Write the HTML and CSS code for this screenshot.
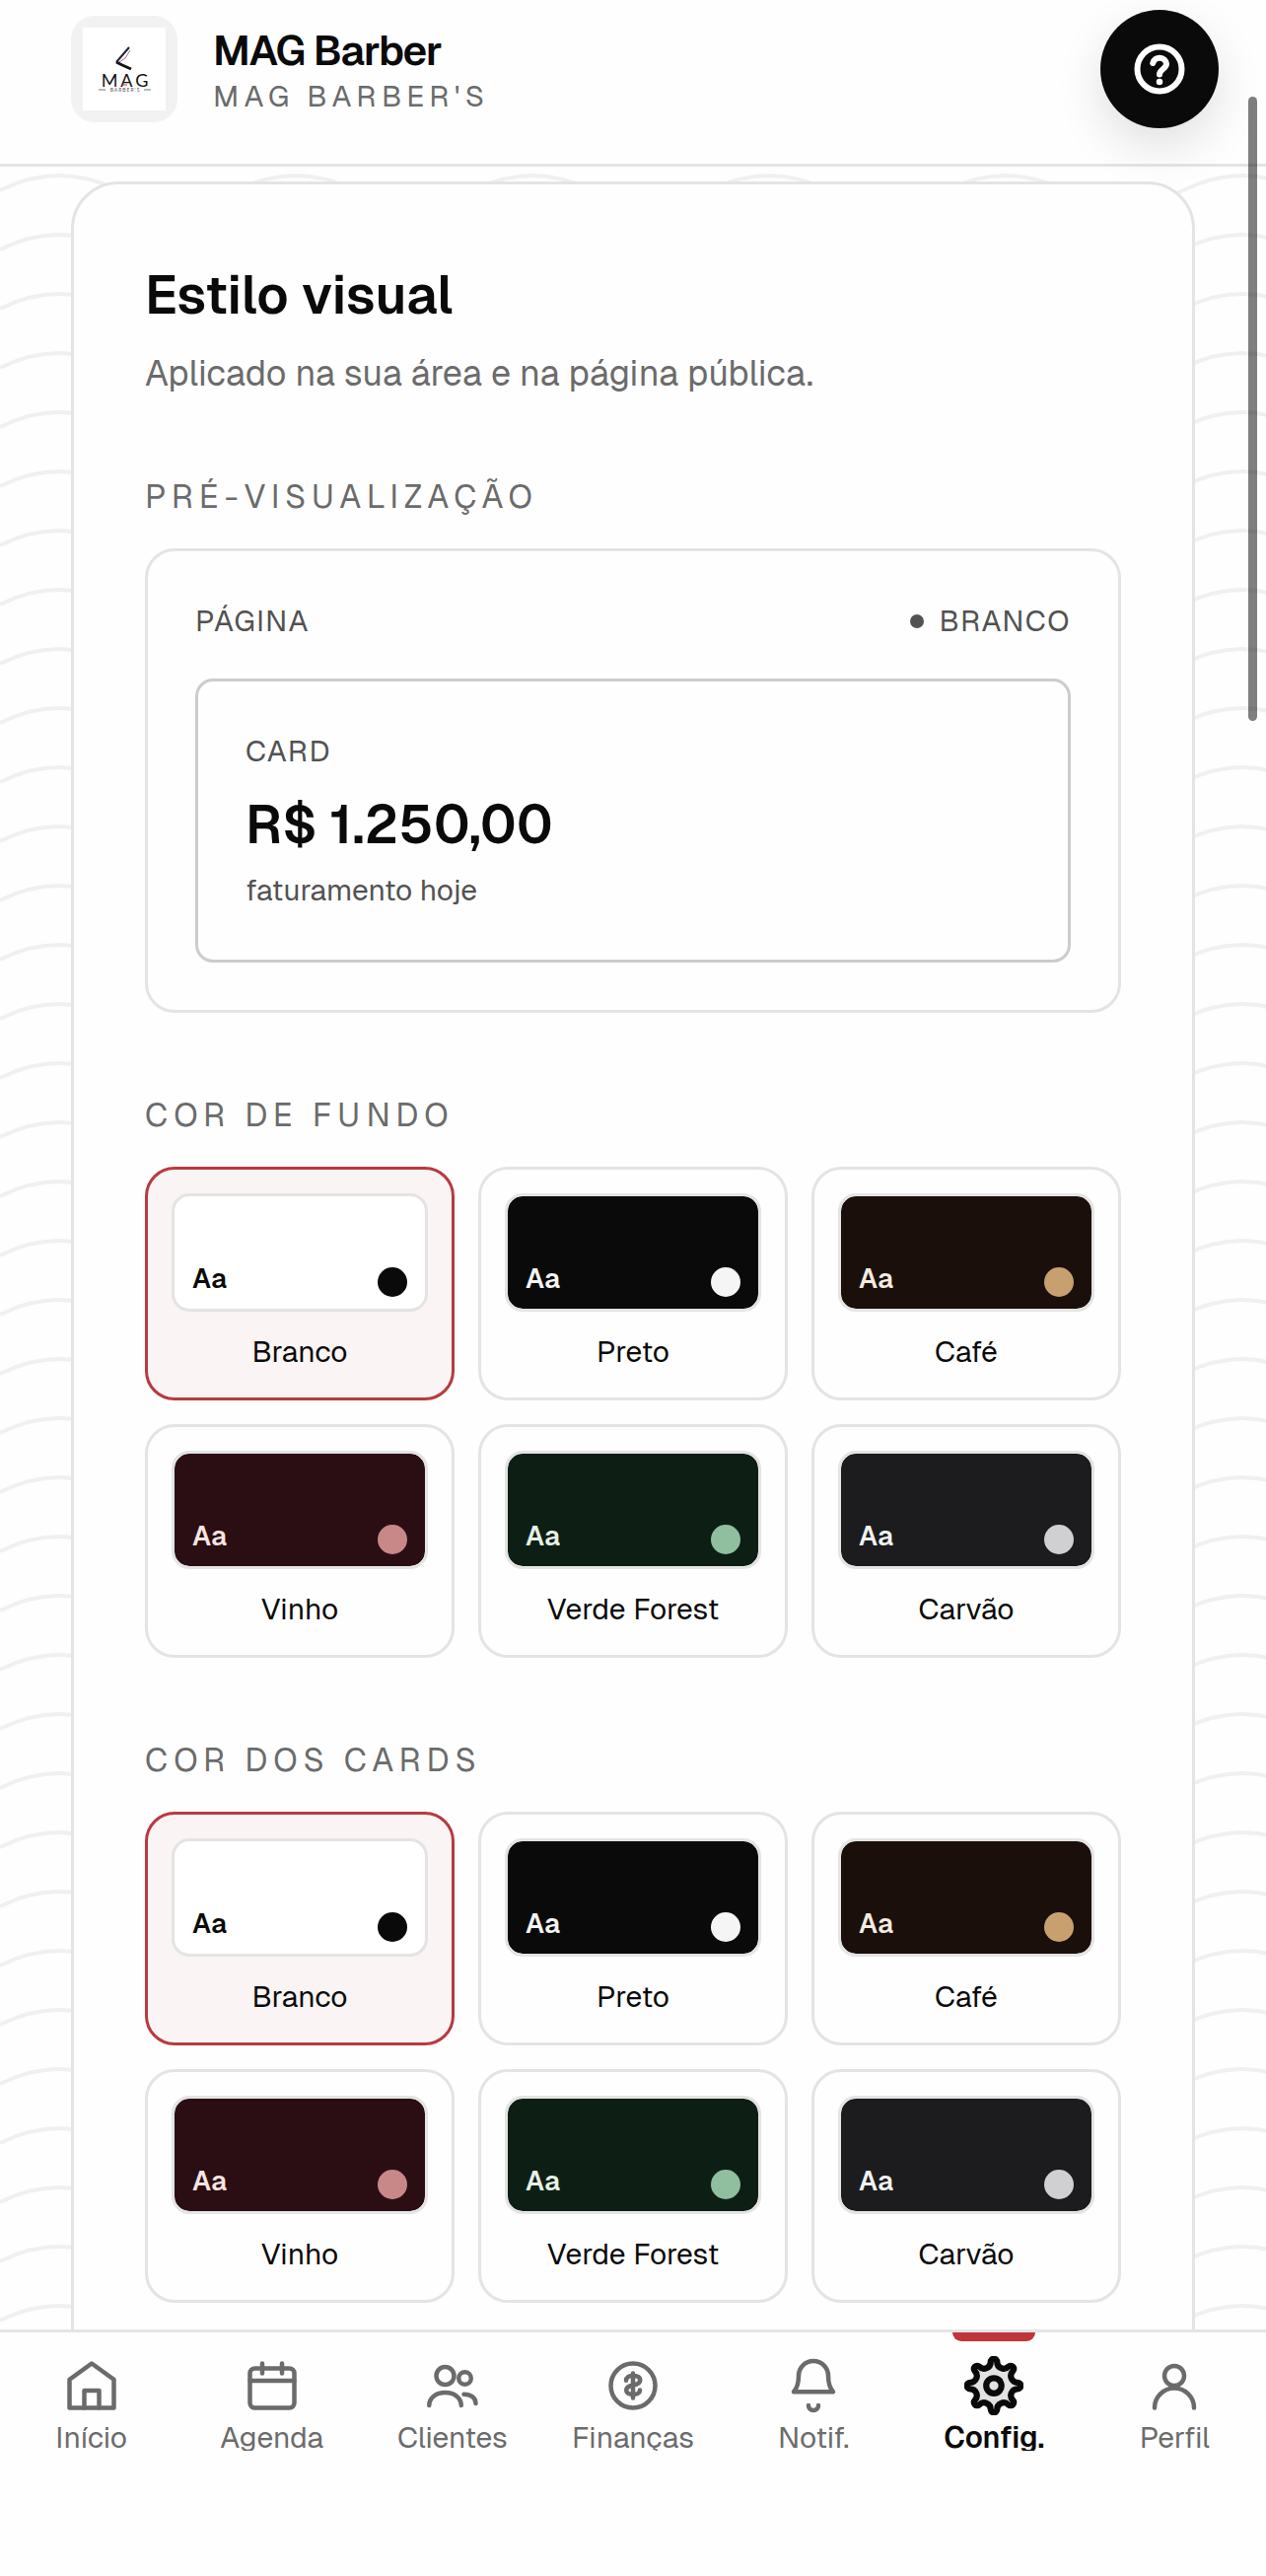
FILE: index.html
```html
<!DOCTYPE html>
<html lang="pt-BR">
<head>
    <meta charset="UTF-8">
    <meta name="viewport" content="width=device-width, initial-scale=1.0">
    <title>MAG Barber - Config.</title>
    <link rel="stylesheet" href="styles.css">
</head>
<body>
    <header class="topbar">
        <div class="logo">
            <svg viewBox="0 0 84 84" aria-hidden="true">
                <rect width="84" height="84" fill="#fff"/>
                <path d="M47 20L34 35" stroke="#1f2340" stroke-width="2" fill="none"/>
                <path d="M48 23L43 31l-6 4" stroke="#a8707c" stroke-width="1" fill="none"/>
                <path d="M34 35l6 3 9 4" stroke="#111" stroke-width="3" fill="none"/>
                <text class="logo-name" x="44" y="60">MAG</text>
                <path d="M39 58h6" stroke="#c0393f" stroke-width="1"/>
                <path d="M16 63h7M62 63h7" stroke="#777" stroke-width="1"/>
                <text class="logo-sub" x="43" y="65">BARBER'S</text>
            </svg>
        </div>
        <div class="brand">
            <h1>MAG Barber</h1>
            <p>MAG BARBER'S</p>
        </div>
        <button class="help" type="button" aria-label="Ajuda">
            <svg viewBox="0 0 24 24" aria-hidden="true">
                <circle cx="12" cy="12" r="9"/>
                <path d="M9.3 9.6a2.8 2.8 0 0 1 5.5.3c0 2-2.8 2.2-2.8 4.3"/>
                <circle class="dot" cx="12" cy="17.2" r="1.3"/>
            </svg>
        </button>
    </header>

    <main class="content">
        <section class="card">
            <h2>Estilo visual</h2>
            <p class="intro">Aplicado na sua área e na página pública.</p>

            <h3 class="label">PRÉ-VISUALIZAÇÃO</h3>
            <div class="preview">
                <div class="preview-head">
                    <span>PÁGINA</span>
                    <span class="current">BRANCO</span>
                </div>
                <div class="preview-card">
                    <p class="tag">CARD</p>
                    <p class="amount">R$ 1.250,00</p>
                    <p>faturamento hoje</p>
                </div>
            </div>

            <fieldset class="group">
                <legend class="label">COR DE FUNDO</legend>
                <div class="options">
                    <label class="option"><input type="radio" name="fundo" checked><span class="swatch branco">Aa</span>Branco</label>
                    <label class="option"><input type="radio" name="fundo"><span class="swatch preto">Aa</span>Preto</label>
                    <label class="option"><input type="radio" name="fundo"><span class="swatch cafe">Aa</span>Café</label>
                    <label class="option"><input type="radio" name="fundo"><span class="swatch vinho">Aa</span>Vinho</label>
                    <label class="option"><input type="radio" name="fundo"><span class="swatch verde">Aa</span>Verde Forest</label>
                    <label class="option"><input type="radio" name="fundo"><span class="swatch carvao">Aa</span>Carvão</label>
                </div>
            </fieldset>

            <fieldset class="group">
                <legend class="label">COR DOS CARDS</legend>
                <div class="options">
                    <label class="option"><input type="radio" name="cards" checked><span class="swatch branco">Aa</span>Branco</label>
                    <label class="option"><input type="radio" name="cards"><span class="swatch preto">Aa</span>Preto</label>
                    <label class="option"><input type="radio" name="cards"><span class="swatch cafe">Aa</span>Café</label>
                    <label class="option"><input type="radio" name="cards"><span class="swatch vinho">Aa</span>Vinho</label>
                    <label class="option"><input type="radio" name="cards"><span class="swatch verde">Aa</span>Verde Forest</label>
                    <label class="option"><input type="radio" name="cards"><span class="swatch carvao">Aa</span>Carvão</label>
                </div>
            </fieldset>
        </section>
    </main>

    <nav class="tabs">
        <a href="#inicio">
            <svg viewBox="0 0 24 24" aria-hidden="true"><path d="M3 9.5L12 3l9 6.5V21H3z"/><path d="M9 21v-7h6v7"/></svg>
            <span>Início</span>
        </a>
        <a href="#agenda">
            <svg viewBox="0 0 24 24" aria-hidden="true"><rect x="3" y="5" width="18" height="16" rx="2"/><path d="M3 10h18M8 3v4M16 3v4"/></svg>
            <span>Agenda</span>
        </a>
        <a href="#clientes">
            <svg viewBox="0 0 24 24" aria-hidden="true"><circle cx="9" cy="8" r="3.6"/><path d="M2.5 20c0-3 2.7-5.2 6.5-5.2s6.5 2.2 6.5 5.2"/><circle cx="17" cy="9" r="2.5"/><path d="M16.6 15.5c2.9 0 4.8 1.5 4.8 3.7"/></svg>
            <span>Clientes</span>
        </a>
        <a href="#financas">
            <svg viewBox="0 0 24 24" aria-hidden="true"><circle cx="12" cy="12" r="9"/><path d="M12 7v10M9.2 9.9c0-1.2 1.2-2 2.8-2s2.9.7 2.9 1.9-1.2 1.7-2.9 2-2.7.8-2.7 2 1.2 1.8 2.7 1.8 2.8-.6 2.8-1.8"/></svg>
            <span>Finanças</span>
        </a>
        <a href="#notif">
            <svg viewBox="0 0 24 24" aria-hidden="true"><path d="M6 8a6 6 0 0 1 12 0c0 3.5.7 5 2 6.5H4C5.3 13 6 11.5 6 8z"/><path d="M10 20a2 2 0 0 0 4 0"/></svg>
            <span>Notif.</span>
        </a>
        <a href="#config" class="active" aria-current="page">
            <svg viewBox="0 0 24 24" aria-hidden="true"><g transform="translate(12 12)"><path d="M-1.3 -9.6A1.3 1.3 0 0 1 1.3 -9.6C1.3 -7.2 4.17 -6.01 5.87 -7.71A1.3 1.3 0 0 1 7.71 -5.87C6.01 -4.17 7.2 -1.3 9.6 -1.3A1.3 1.3 0 0 1 9.6 1.3C7.2 1.3 6.01 4.17 7.71 5.87A1.3 1.3 0 0 1 5.87 7.71C4.17 6.01 1.3 7.2 1.3 9.6A1.3 1.3 0 0 1 -1.3 9.6C-1.3 7.2 -4.17 6.01 -5.87 7.71A1.3 1.3 0 0 1 -7.71 5.87C-6.01 4.17 -7.2 1.3 -9.6 1.3A1.3 1.3 0 0 1 -9.6 -1.3C-7.2 -1.3 -6.01 -4.17 -7.71 -5.87A1.3 1.3 0 0 1 -5.87 -7.71C-4.17 -6.01 -1.3 -7.2 -1.3 -9.6z"/><circle r="3.1"/></g></svg>
            <span>Config.</span>
        </a>
        <a href="#perfil">
            <svg viewBox="0 0 24 24" aria-hidden="true"><circle cx="12" cy="8" r="4"/><path d="M4 21a8 8 0 0 1 16 0"/></svg>
            <span>Perfil</span>
        </a>
    </nav>

    <div class="scroll-thumb"></div>
</body>
</html>
```
FILE: styles.css
```css
* {
    box-sizing: border-box;
    margin: 0;
    padding: 0;
}
body {
    position: relative;
    display: flex;
    flex-direction: column;
    height: 100vh;
    overflow: hidden;
    background: #fefefe;
    color: #0a0a0a;
    font-family: "Geist", "Inter", sans-serif;
    font-size: 30px;
    line-height: 45px;
}

/* header */
.topbar {
    position: relative;
    z-index: 1;
    display: flex;
    align-items: center;
    gap: 36px;
    padding: 10px 48px 36px 72px;
    background: #fefefe;
    border-bottom: 3px solid #e4e4e4;
}
.logo {
    display: flex;
    padding: 12px;
    border-radius: 24px;
    background: #f2f2f2;
}
.logo svg {
    width: 84px;
    height: 84px;
}
.logo-name {
    font-family: "Lato", sans-serif;
    font-size: 18px;
    letter-spacing: 3px;
    text-anchor: middle;
    fill: #111;
}
.logo-sub {
    font-family: "Lato", sans-serif;
    font-size: 5px;
    letter-spacing: 1px;
    text-anchor: middle;
    fill: #555;
}
.brand {
    flex: 1;
    padding-top: 6px;
}
.brand h1 {
    font-size: 42px;
    font-weight: 600;
    line-height: 48px;
    letter-spacing: -0.025em;
}
.brand p {
    color: #6b6b6b;
    letter-spacing: 0.18em;
}
.help {
    display: flex;
    align-items: center;
    justify-content: center;
    width: 120px;
    height: 120px;
    border: none;
    border-radius: 50%;
    background: #0a0a0a;
    box-shadow: 0 18px 48px rgba(0, 0, 0, 0.12);
    cursor: pointer;
}
.help svg {
    width: 60px;
    height: 60px;
    fill: none;
    stroke: #fff;
    stroke-width: 2.4;
    stroke-linecap: round;
}
.help .dot {
    fill: #fff;
    stroke: none;
}

/* page */
.content {
    flex: 1;
    min-height: 0;
    overflow: hidden;
    padding: 15px 72px;
    background: url("data:image/svg+xml,%3Csvg xmlns='http://www.w3.org/2000/svg' width='240' height='60'%3E%3Cpath d='M0 30Q60 0 120 30T240 30' fill='none' stroke='%23f0f0f0' stroke-width='4'/%3E%3C/svg%3E") 0 -6px;
}
.card {
    padding: 72px;
    border: 3px solid #e4e4e4;
    border-radius: 48px;
    background: #fefefe;
}
.card h2 {
    font-size: 54px;
    font-weight: 600;
    line-height: 81px;
}
.intro {
    margin: 12px 0 72px;
    color: #6b6b6b;
    font-size: 36px;
    line-height: 54px;
}
.label {
    margin-bottom: 27px;
    color: #6b6b6b;
    font-size: 33px;
    font-weight: 400;
    line-height: 51px;
    letter-spacing: 0.18em;
}
.preview {
    padding: 48px;
    border: 3px solid #e4e4e4;
    border-radius: 30px;
    color: #525252;
}
.preview-head {
    display: flex;
    justify-content: space-between;
    margin-bottom: 36px;
    letter-spacing: 0.05em;
}
.current {
    display: flex;
    align-items: center;
    gap: 15px;
}
.current::before {
    content: "";
    width: 14px;
    height: 14px;
    border-radius: 50%;
    background: #525252;
}
.preview-card {
    padding: 48px;
    border: 3px solid #cccccc;
    border-radius: 18px;
}
.tag {
    letter-spacing: 0.05em;
}
.amount {
    margin: 12px 0 3px;
    color: #0a0a0a;
    font-size: 54px;
    font-weight: 600;
    line-height: 81px;
}

/* colour pickers */
.group {
    margin-top: 78px;
    border: none;
}
.options {
    display: grid;
    grid-template-columns: repeat(3, 1fr);
    gap: 24px;
}
.option {
    position: relative;
    padding: 24px;
    border: 3px solid #e4e4e4;
    border-radius: 30px;
    text-align: center;
    cursor: pointer;
}
.option:has(input:checked) {
    border-color: #b83a40;
    background: #faf4f4;
}
.option input {
    position: absolute;
    opacity: 0;
}
.swatch {
    display: flex;
    align-items: flex-end;
    justify-content: space-between;
    height: 120px;
    margin-bottom: 18px;
    padding: 12px 18px;
    border: 3px solid #e4e4e4;
    border-radius: 18px;
    background-clip: padding-box;
    font-size: 27px;
    font-weight: 600;
    line-height: 36px;
}
.swatch::after {
    content: "";
    width: 30px;
    height: 30px;
    border-radius: 50%;
    background: currentColor;
}
.branco {
    background-color: #fff;
    color: #0a0a0a;
}
.preto {
    background-color: #0a0a0a;
    color: #f5f5f5;
}
.cafe {
    background-color: #1a0f0a;
    color: #f5ebe0;
}
.cafe::after {
    background: #c8a070;
}
.vinho {
    background-color: #2a0e14;
    color: #f8e4e0;
}
.vinho::after {
    background: #c88888;
}
.verde {
    background-color: #0d1f15;
    color: #e8f0e6;
}
.verde::after {
    background: #8fbf9f;
}
.carvao {
    background-color: #1c1c1e;
    color: #f2f2f2;
}
.carvao::after {
    background: #d0d0d2;
}

/* bottom tabs */
.tabs {
    display: grid;
    grid-template-columns: repeat(7, 1fr);
    padding: 0 1px 127px;
    border-top: 3px solid #e4e4e4;
    background: #fefefe;
}
.tabs a {
    position: relative;
    display: flex;
    flex-direction: column;
    align-items: center;
    gap: 9px;
    padding-top: 24px;
    color: #6b6b6b;
    text-decoration: none;
}
.tabs svg {
    width: 60px;
    height: 60px;
    fill: none;
    stroke: currentColor;
    stroke-width: 1.8;
    stroke-linecap: round;
    stroke-linejoin: round;
}
.tabs span {
    overflow: hidden;
    line-height: 27px;
}
.tabs .active {
    color: #0a0a0a;
    font-weight: 600;
}
.tabs .active svg {
    fill: #e2e2e2;
    stroke-width: 2.5;
}
.tabs .active::before {
    content: "";
    position: absolute;
    top: 0;
    width: 84px;
    height: 9px;
    border-radius: 0 0 9px 9px;
    background: #c0343c;
}

.scroll-thumb {
    position: absolute;
    z-index: 2;
    top: 98px;
    right: 9px;
    width: 9px;
    height: 633px;
    border-radius: 5px;
    background: rgba(0, 0, 0, 0.5);
}
```
